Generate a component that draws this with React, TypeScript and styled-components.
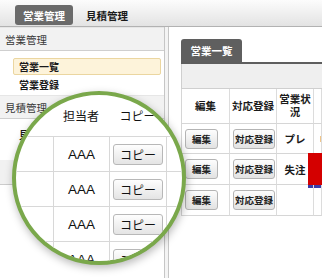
import React from 'react';
import styled, { createGlobalStyle } from 'styled-components';

const Global = createGlobalStyle`
  html, body { margin: 0; padding: 0; background: #fff; }
  body {
    width: 322px; height: 278px; overflow: hidden;
    font-family: "Liberation Sans", "Noto Sans CJK JP", sans-serif;
    color: #222;
  }
`;

const Page = styled.div`
  position: relative;
  width: 322px;
  height: 278px;
  overflow: hidden;
  display: flex;
  flex-direction: column;
`;

const TopBar = styled.div`
  flex: none;
  height: 27px;
  box-sizing: border-box;
  padding: 5px 0 0 15px;
  display: flex;
  align-items: flex-start;
  background: linear-gradient(#fcfcfc, #e3e3e3);
  border-bottom: 1px solid #b2b2b2;
`;

const NavTab = styled.div<{ $active?: boolean }>`
  height: 20px;
  padding: 0 8px;
  margin-right: 5px;
  display: flex;
  align-items: center;
  border-radius: 3px;
  font-size: 10.5px;
  font-weight: bold;
  background: ${p => (p.$active ? '#6a6a6a' : 'transparent')};
  color: ${p => (p.$active ? '#fff' : '#1a1a1a')};
`;

const Body = styled.div`
  flex: 1;
  display: flex;
  min-height: 0;
`;

const Sidebar = styled.div`
  width: 164px;
  flex: none;
  border-right: 1px solid #c6c6c6;
  display: flex;
  flex-direction: column;
`;

const SideHeader = styled.div`
  height: 24px;
  box-sizing: border-box;
  padding: 5px 0 0 5px;
  line-height: 14px;
  font-size: 10.5px;
  color: #3a3a3a;
  background: #f2f2f2;
  border-top: 1px solid #e6e6e6;
  border-bottom: 1px solid #cfcfcf;
`;

const SideList = styled.div`
  padding: 7px 3px 2px 13px;
  display: flex;
  flex-direction: column;
  gap: 1px;
`;

const SideItem = styled.div<{ $selected?: boolean }>`
  height: 17px;
  box-sizing: border-box;
  padding-left: 5px;
  display: flex;
  align-items: center;
  font-size: 10px;
  font-weight: bold;
  color: #1a1a1a;
  border-radius: 2px;
  border: 1px solid ${p => (p.$selected ? '#ebd6a0' : 'transparent')};
  background: ${p => (p.$selected ? '#fdf3da' : 'transparent')};
`;

const SideSpacer = styled.div`
  height: 15px;
`;

const SideFooter = styled.div`
  height: 25px;
  box-sizing: border-box;
  background: #f1f1f1;
  border-bottom: 1px solid #cccccc;
`;

const Splitter = styled.div`
  width: 3px;
  flex: none;
  background: #f4f4f4;
`;

const Main = styled.div`
  flex: 1;
  min-width: 0;
  border-left: 1px solid #c6c6c6;
  padding: 12px 0 0 12px;
  display: flex;
  flex-direction: column;
`;

const TabRow = styled.div`
  display: flex;
  border-bottom: 2px solid #5e5e5e;
`;

const PanelTab = styled.div`
  width: 61px;
  height: 23px;
  display: flex;
  align-items: center;
  justify-content: center;
  background: #5f5f5f;
  color: #fff;
  font-size: 10.5px;
  font-weight: bold;
  border-radius: 3px 3px 0 0;
`;

const FilterBox = styled.div`
  height: 25px;
  box-sizing: border-box;
  background: #efefef;
  border-left: 1px solid #cfcfcf;
  border-bottom: 1px solid #cfcfcf;
`;

const Grid = styled.div`
  display: grid;
  grid-template-columns: 48px 47px 37px 1fr;
  border-left: 1px solid #d6d6d6;
`;

const HeadCell = styled.div`
  height: 34px;
  border-right: 1px solid #dcdcdc;
  border-bottom: 1px solid #d6d6d6;
  display: flex;
  align-items: center;
  justify-content: center;
  text-align: center;
  padding: 0 2px;
  font-size: 10.5px;
  line-height: 13px;
  font-weight: bold;
  color: #1a1a1a;
`;

const Cell = styled.div<{ $h: number; $align?: string }>`
  height: ${p => p.$h}px;
  border-right: 1px solid #dcdcdc;
  border-bottom: 1px solid #d6d6d6;
  display: flex;
  align-items: center;
  justify-content: ${p => p.$align || 'flex-start'};
  padding-left: ${p => (p.$align ? 0 : 3)}px;
  font-size: 10.5px;
  font-weight: bold;
  color: #1a1a1a;
  min-width: 0;
`;

const SmallButton = styled.div<{ $w: number }>`
  width: ${p => p.$w}px;
  height: 20px;
  box-sizing: border-box;
  display: flex;
  align-items: center;
  justify-content: center;
  border: 1px solid #b4b4b4;
  border-radius: 3px;
  background: linear-gradient(#fdfdfd, #e2e2e2);
  font-size: 9.5px;
  font-weight: bold;
  color: #222;
  white-space: nowrap;
`;

const GanttBar = styled.div`
  align-self: stretch;
  flex: none;
  margin: -1px 0 -4px -9px;
  width: 20px;
  background: #d40000;
  border-bottom: 3px solid #3b3ba8;
`;

const GanttDot = styled.div`
  width: 2px;
  height: 6px;
  margin-left: 3px;
  background: #f1c68a;
`;

/* ---- magnifier ---- */

const Lens = styled.div`
  position: absolute;
  left: 12px;
  top: 91px;
  width: 174px;
  height: 174px;
  box-sizing: border-box;
  border-radius: 50%;
  border: 4px solid #7aa84b;
  background: #fff;
  overflow: hidden;
  box-shadow: 1px 3px 8px rgba(0, 0, 0, 0.28);
`;

const ZoomGrid = styled.div`
  display: grid;
  grid-template-columns: 37px 56px 57px 40px;
  grid-auto-rows: 35px;
  grid-template-rows: 42px;
`;

const ZHead = styled.div`
  border-bottom: 1px solid #d8d8d8;
  display: flex;
  align-items: center;
  justify-content: center;
  font-size: 12px;
  font-family: "Noto Sans CJK JP", sans-serif;
  color: #111;
`;

const ZCell = styled.div<{ $first?: boolean }>`
  border-bottom: 1px solid #d8d8d8;
  border-left: ${p => (p.$first ? 'none' : '1px solid #d8d8d8')};
  display: flex;
  align-items: center;
  justify-content: center;
  font-size: 13.5px;
  color: #111;
`;

const ZButton = styled.div`
  width: 50px;
  height: 21px;
  box-sizing: border-box;
  display: flex;
  align-items: center;
  justify-content: center;
  border: 1px solid #b8b8b8;
  border-radius: 3px;
  background: linear-gradient(#fefefe, #e4e4e4);
  font-size: 12px;
  font-family: "Noto Sans CJK JP", sans-serif;
  color: #111;
`;

const rows = [
  { h: 29, status: 'プレ', bar: false },
  { h: 30, status: '失注', bar: true },
  { h: 30, status: '', bar: false },
];

export default function App() {
  return (
    <>
      <Global />
      <Page>
        <TopBar>
          <NavTab $active>営業管理</NavTab>
          <NavTab>見積管理</NavTab>
        </TopBar>
        <Body>
          <Sidebar>
            <SideHeader>営業管理</SideHeader>
            <SideList>
              <SideItem $selected>営業一覧</SideItem>
              <SideItem>営業登録</SideItem>
            </SideList>
            <SideHeader>見積管理</SideHeader>
            <SideList>
              <SideItem>見積一覧</SideItem>
            </SideList>
            <SideSpacer />
            <SideFooter />
          </Sidebar>
          <Splitter />
          <Main>
            <TabRow>
              <PanelTab>営業一覧</PanelTab>
            </TabRow>
            <FilterBox />
            <Grid>
              <HeadCell>編集</HeadCell>
              <HeadCell>対応登録</HeadCell>
              <HeadCell>営業状況</HeadCell>
              <HeadCell />
              {rows.map((r, i) => (
                <React.Fragment key={i}>
                  <Cell $h={r.h}>
                    <SmallButton $w={33}>編集</SmallButton>
                  </Cell>
                  <Cell $h={r.h}>
                    <SmallButton $w={42}>対応登録</SmallButton>
                  </Cell>
                  <Cell $h={r.h} $align="center">
                    {r.status}
                  </Cell>
                  <Cell $h={r.h}>
                    {r.bar ? <GanttBar /> : i === 0 ? <GanttDot /> : null}
                  </Cell>
                </React.Fragment>
              ))}
            </Grid>
          </Main>
        </Body>
        <Lens>
          <ZoomGrid>
            <ZHead />
            <ZHead>担当者</ZHead>
            <ZHead>コピー</ZHead>
            <ZHead />
            {[0, 1, 2, 3].map(i => (
              <React.Fragment key={i}>
                <ZCell $first />
                <ZCell>AAA</ZCell>
                <ZCell>
                  <ZButton>コピー</ZButton>
                </ZCell>
                <ZCell />
              </React.Fragment>
            ))}
          </ZoomGrid>
        </Lens>
      </Page>
    </>
  );
}
